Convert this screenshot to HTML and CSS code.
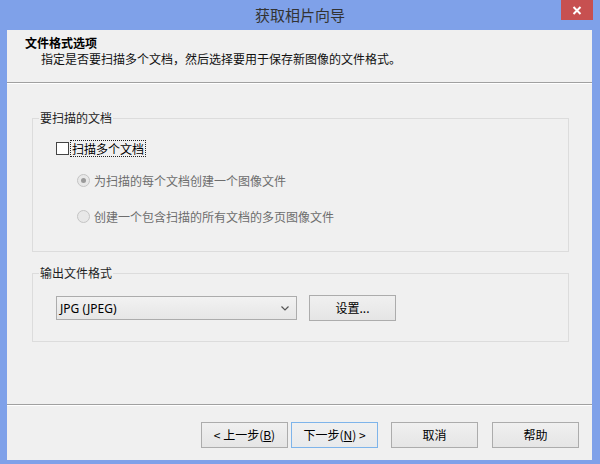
FILE: index.html
```html
<!DOCTYPE html>
<html lang="zh-CN">
<head>
<meta charset="utf-8">
<title>获取相片向导</title>
<link rel="stylesheet" href="styles.css">
</head>
<body>
<div class="window">
  <div class="titlebar">
    <div class="title">获取相片向导</div>
    <div class="close">
      <svg width="10" height="9" viewBox="0 0 10 9"><path d="M1.5 1 L8.5 8 M8.5 1 L1.5 8" stroke="#fff" stroke-width="2" fill="none"/></svg>
    </div>
  </div>
  <div class="client">
    <div class="header">
      <div class="h-title">文件格式选项</div>
      <div class="h-sub">指定是否要扫描多个文档，然后选择要用于保存新图像的文件格式。</div>
    </div>
    <div class="sep"></div>
    <div class="body">
      <fieldset class="group g1">
        <legend>要扫描的文档</legend>
        <div class="check-row">
          <span class="checkbox"></span>
          <span class="focus">扫描多个文档</span>
        </div>
        <div class="radio-row r1">
          <span class="radio checked"></span>
          <span class="disabled">为扫描的每个文档创建一个图像文件</span>
        </div>
        <div class="radio-row r2">
          <span class="radio"></span>
          <span class="disabled">创建一个包含扫描的所有文档的多页图像文件</span>
        </div>
      </fieldset>
      <fieldset class="group g2">
        <legend>输出文件格式</legend>
        <div class="format-row">
          <div class="combo">
            <span>JPG (JPEG)</span>
            <svg width="8" height="5" viewBox="0 0 8 5"><path d="M0.5 0.5 L4 4 L7.5 0.5" stroke="#555" stroke-width="1.2" fill="none"/></svg>
          </div>
          <div class="btn settings">设置...</div>
        </div>
      </fieldset>
    </div>
    <div class="sep"></div>
    <div class="footer">
      <div class="btn">&lt; 上一步(<u>B</u>)</div>
      <div class="btn default">下一步(<u>N</u>) &gt;</div>
      <div class="btn cancel">取消</div>
      <div class="btn help">帮助</div>
    </div>
  </div>
</div>
</body>
</html>
```

FILE: styles.css
```css
* { box-sizing: border-box; }
html, body { margin: 0; padding: 0; }
body {
  width: 600px;
  height: 464px;
  overflow: hidden;
  font-family: "Noto Sans CJK SC", "Noto Sans", sans-serif;
  font-size: 12px;
  color: #000;
}
.window {
  width: 600px;
  height: 464px;
  background: #7fa1e9;
  display: flex;
  flex-direction: column;
}
.titlebar {
  height: 30px;
  display: grid;
  grid-template-columns: 1fr auto 1fr;
}
.title {
  grid-column: 2;
  font-size: 15px;
  line-height: 29px;
  color: #333;
}
.close {
  grid-column: 3;
  justify-self: end;
  width: 32px;
  height: 20px;
  margin-right: 7px;
  background: #c75050;
  display: flex;
  align-items: center;
  justify-content: center;
}
.client {
  flex: 1;
  margin: 0 8px 4px 7px;
  background: #f0f0f0;
  display: flex;
  flex-direction: column;
}
.header {
  height: 52px;
  padding: 5px 0 0 18px;
}
.h-title {
  font-weight: bold;
  line-height: 16px;
}
.h-sub {
  line-height: 16px;
  padding-left: 16px;
  color: #111;
}
.sep {
  border-top: 1px solid #a0a0a0;
  border-bottom: 1px solid #ffffff;
}
.body {
  flex: 1;
  padding: 26px 23px 0 25px;
}
.group {
  margin: 0;
  padding: 0;
  min-width: 0;
  border: 1px solid #dcdcdc;
}
.group legend {
  margin-left: 6px;
  padding: 0 1px;
  line-height: 16px;
  color: #1e1e1e;
}
.g1 { padding-bottom: 26px; }
.g2 { margin-top: 13px; padding-bottom: 20px; }
.check-row {
  display: flex;
  align-items: center;
  margin-top: 14px;
  padding-left: 23px;
  height: 17px;
}
.checkbox {
  width: 13px;
  height: 13px;
  border: 1px solid #444;
  background: #fff;
  margin-right: 1px;
}
.focus {
  border: 1px dotted #222;
  line-height: 15px;
  padding: 0 1px;
}
.radio-row {
  display: flex;
  align-items: center;
  height: 17px;
  padding-left: 44px;
}
.r1 { margin-top: 15px; }
.r2 { margin-top: 19px; }
.radio {
  width: 13px;
  height: 13px;
  border-radius: 50%;
  border: 1px solid #c4c4c4;
  background: #e8e8e8;
  margin-right: 4px;
  display: flex;
  align-items: center;
  justify-content: center;
}
.radio.checked::after {
  content: "";
  width: 5px;
  height: 5px;
  border-radius: 50%;
  background: #9a9a9a;
}
.disabled {
  color: #6d6d6d;
  line-height: 17px;
}
.format-row {
  display: flex;
  align-items: center;
  margin-top: 14px;
  padding-left: 23px;
  height: 26px;
}
.combo {
  width: 241px;
  height: 24px;
  border: 1px solid #acacac;
  background: linear-gradient(#f2f2f2, #e6e6e6);
  display: flex;
  align-items: center;
  justify-content: space-between;
  padding: 0 7px 0 3px;
  font-family: "Noto Sans", "Noto Sans CJK SC", sans-serif;
}
.btn {
  width: 87px;
  height: 26px;
  border: 1px solid #acacac;
  background: linear-gradient(#f0f0f0, #e5e5e5);
  display: flex;
  align-items: center;
  justify-content: center;
  line-height: 16px;
}
.settings { margin-left: 12px; }
.footer {
  height: 54px;
  display: flex;
  justify-content: flex-end;
  padding: 16px 13px 0 0;
}
.default {
  margin-left: 3px;
  border-color: #7eb4ea;
  background: linear-gradient(#f0f0f0, #e8eaec);
}
.cancel { margin-left: 13px; }
.help { margin-left: 14px; }
```
